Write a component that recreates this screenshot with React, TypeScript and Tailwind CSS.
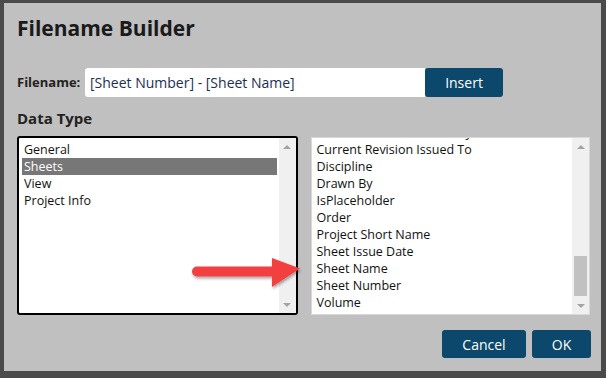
import React from "react";

const font = { fontFamily: '"Open Sans", "Liberation Sans", sans-serif' };

const leftItems = ["General", "Sheets", "View", "Project Info"];
const rightItems = [
  "Current Revision Issued By",
  "Current Revision Issued To",
  "Discipline",
  "Drawn By",
  "IsPlaceholder",
  "Order",
  "Project Short Name",
  "Sheet Issue Date",
  "Sheet Name",
  "Sheet Number",
  "Volume",
];

function Scrollbar({ thumb }: { thumb?: boolean }) {
  return (
    <div className="flex h-full w-[17px] shrink-0 flex-col items-center bg-[#f0f0f0]">
      <div className="flex h-[17px] w-full items-center justify-center">
        <div className="h-0 w-0 border-x-[4px] border-b-[4px] border-x-transparent border-b-[#a3a3a3]" />
      </div>
      <div className="flex flex-1 w-full flex-col justify-end px-[2px]">
        {thumb && <div className="mb-[1px] h-[40px] w-full bg-[#c1c1c1]" />}
      </div>
      <div className="flex h-[17px] w-full items-center justify-center">
        <div className="h-0 w-0 border-x-[4px] border-t-[4px] border-x-transparent border-t-[#a3a3a3]" />
      </div>
    </div>
  );
}

export default function App() {
  return (
    <div
      className="relative h-[378px] w-[606px] overflow-hidden bg-[#4a4a4a] pl-[4px] pt-[3px]"
      style={font}
    >
      <div className="flex h-[368px] w-[597px] flex-col bg-[#c0c0c0] pl-[13px] pr-[11px]">
        {/* Title */}
        <h1 className="mt-[10px] h-[30px] text-[21px] leading-[30px] font-bold text-[#1a1a1a]">
          Filename Builder
        </h1>

        {/* Filename row */}
        <div className="mt-[25px] flex h-[29px] items-center">
          <span className="w-[68px] text-[13px] font-bold text-[#222]">Filename:</span>
          <div className="flex h-full w-[340px] items-center rounded-l-[3px] bg-white pl-[5px] text-[14px] text-[#1c2f52]">
            [Sheet Number] - [Sheet Name]
          </div>
          <button className="h-full w-[78px] rounded-[3px] bg-[#0b486c] text-[14px] text-white">
            Insert
          </button>
        </div>

        {/* Data type */}
        <div className="mt-[10px] h-[22px] text-[15px] leading-[22px] font-bold text-[#222]">
          Data Type
        </div>

        <div className="mt-[7px] flex h-[179px] gap-[13px]">
          {/* Left list */}
          <div className="flex h-full w-[281px] rounded-[3px] border-2 border-black bg-white">
            <div className="flex-1 pl-[3px] pr-[2px] pt-[3px] text-[12.5px] leading-[17px] text-[#111]">
              {leftItems.map((it) => (
                <div
                  key={it}
                  className={
                    it === "Sheets"
                      ? "h-[17px] bg-[#777777] pl-[2px] text-white"
                      : "h-[17px] pl-[2px]"
                  }
                >
                  {it}
                </div>
              ))}
            </div>
            <Scrollbar />
          </div>

          {/* Right list */}
          <div className="mt-[1px] flex h-[178px] w-[280px] border border-[#d8d8d8] bg-white">
            <div className="flex-1 overflow-hidden pl-[5px] text-[12.5px] leading-[17px] text-[#111]">
              <div className="-mt-[14px]">
                {rightItems.map((it) => (
                  <div key={it} className="h-[17px]">
                    {it}
                  </div>
                ))}
              </div>
            </div>
            <Scrollbar thumb />
          </div>
        </div>

        {/* Buttons */}
        <div className="mt-[15px] flex justify-end gap-[6px]">
          <button className="h-[28px] w-[84px] rounded-[3px] bg-[#0b486c] text-[14px] text-white">
            Cancel
          </button>
          <button className="mr-[-1px] h-[28px] w-[59px] rounded-[3px] bg-[#0b486c] text-[14px] text-white">
            OK
          </button>
        </div>
      </div>

      {/* Red annotation arrow */}
      <svg
        className="absolute left-[186px] top-[254px]"
        width="120"
        height="40"
        viewBox="0 0 120 40"
      >
        <defs>
          <filter id="sh" x="-20%" y="-40%" width="140%" height="180%">
            <feDropShadow dx="1" dy="2" stdDeviation="1.5" floodColor="#000" floodOpacity="0.35" />
          </filter>
        </defs>
        <g filter="url(#sh)">
          <line x1="11" y1="17.5" x2="88" y2="17.5" stroke="#f24141" strokeWidth="10" strokeLinecap="round" />
          <polygon points="86,4 114,14.5 86,33" fill="#f24141" />
        </g>
      </svg>
    </div>
  );
}
